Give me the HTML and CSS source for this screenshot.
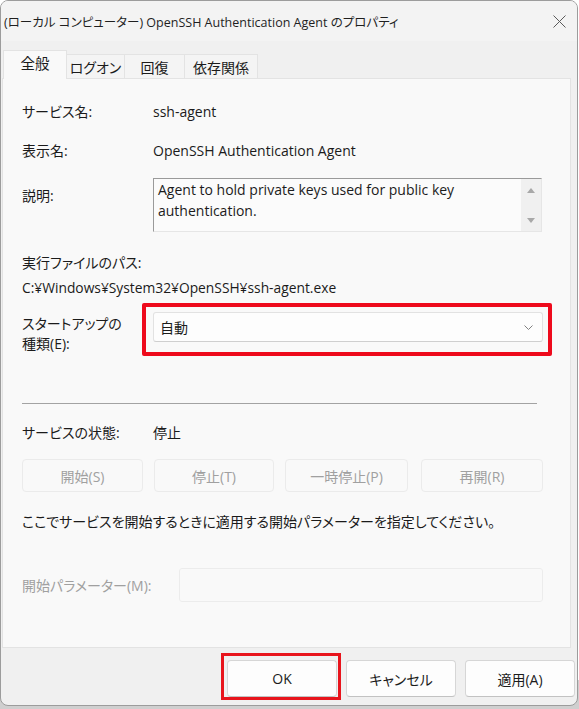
FILE: index.html
```html
<!DOCTYPE html>
<html lang="ja">
<head>
<meta charset="utf-8">
<title>OpenSSH Authentication Agent のプロパティ</title>
<link rel="stylesheet" href="styles.css">
</head>
<body>
<div class="window">
  <div class="titlebar">
    <span class="title">(ローカル コンピューター) OpenSSH Authentication Agent のプロパティ</span>
    <svg class="close" width="13" height="13" viewBox="0 0 13 13"><path d="M0.5 0.5 L12.5 12.5 M12.5 0.5 L0.5 12.5" stroke="#5a5a5a" stroke-width="1" fill="none"/></svg>
  </div>
  <div class="tabs">
    <div class="tab active">全般</div>
    <div class="tab t-logon">ログオン</div>
    <div class="tab t-recovery">回復</div>
    <div class="tab t-deps">依存関係</div>
  </div>
  <div class="panel">
    <div class="row r-name"><span class="label">サービス名:</span><span class="value">ssh-agent</span></div>
    <div class="row r-display"><span class="label">表示名:</span><span class="value">OpenSSH Authentication Agent</span></div>
    <div class="row r-desc">
      <span class="label">説明:</span>
      <div class="desc">
        <div class="desc-text">Agent to hold private keys used for public key authentication.</div>
        <div class="scroll">
          <span class="arrow up"></span>
          <span class="arrow down"></span>
        </div>
      </div>
    </div>
    <div class="row r-pathlabel"><span class="label">実行ファイルのパス:</span></div>
    <div class="row r-path"><span class="path">C:¥Windows¥System32¥OpenSSH¥ssh-agent.exe</span></div>
    <div class="row r-startup">
      <span class="label two">スタートアップの<br>種類(E):</span>
      <div class="select-wrap">
        <div class="select"><span>自動</span><svg class="chev" width="9" height="5" viewBox="0 0 9 5"><path d="M0.5 0.5 L4.5 4.5 L8.5 0.5" stroke="#808080" stroke-width="1" fill="none"/></svg></div>
        <div class="highlight hl-select"></div>
      </div>
    </div>
    <div class="sep"></div>
    <div class="row r-status"><span class="label">サービスの状態:</span><span class="value">停止</span></div>
    <div class="btnrow">
      <div class="dbtn b1">開始(S)</div>
      <div class="dbtn b2">停止(T)</div>
      <div class="dbtn b3">一時停止(P)</div>
      <div class="dbtn b4">再開(R)</div>
    </div>
    <div class="row r-info"><span class="info">ここでサービスを開始するときに適用する開始パラメーターを指定してください。</span></div>
    <div class="row r-param"><span class="label dim">開始パラメーター(M):</span><div class="param-input"></div></div>
  </div>
  <div class="footer">
    <div class="okwrap"><div class="btn">OK</div><div class="highlight hl-ok"></div></div>
    <div class="btn">キャンセル</div>
    <div class="btn">適用(A)</div>
  </div>
</div>
</body>
</html>
```

FILE: styles.css
```css
* { box-sizing: border-box; }
html, body {
  margin: 0;
  padding: 0;
}
body {
  width: 579px;
  height: 709px;
  overflow: hidden;
  background: linear-gradient(#ffffff 0 680px, #cfcfcf 680px);
  font-family: "Open Sans", "Noto Sans CJK JP", sans-serif;
  font-feature-settings: "palt";
  font-size: 14px;
  color: #1b1b1b;
}
.window {
  width: 578px;
  height: 706px;
  border: 1px solid #9c9c9c;
  border-radius: 8px;
  background: #f0f0f0;
  overflow: hidden;
}
.titlebar {
  height: 40px;
  display: flex;
  align-items: center;
  justify-content: space-between;
  padding: 0 11px 0 3px;
  background: #f3f3f3;
}
.title {
  font-size: 12.5px;
  color: #1f1f1f;
  white-space: nowrap;
}
.tabs {
  display: flex;
  align-items: flex-end;
  height: 28px;
  margin-top: 9px;
  padding-left: 2px;
  position: relative;
  z-index: 2;
}
.tab {
  height: 24px;
  border: 1px solid #e3e3e3;
  border-bottom: none;
  background: #f4f4f4;
  display: flex;
  align-items: center;
  justify-content: center;
  font-size: 14px;
  margin-left: -1px;
}
.tab.active {
  height: 29px;
  width: 64px;
  background: #f9f9f9;
  font-size: 14.5px;
  padding-bottom: 5px;
  margin-left: 0;
  margin-bottom: -1px;
}
.t-logon { width: 59px; }
.t-recovery { width: 61px; }
.t-deps { width: 74px; }
.panel {
  margin-left: 1px;
  width: 569px;
  height: 570px;
  border: 1px solid #e3e3e3;
  background: #f9f9f9;
  padding-left: 19px;
  display: flex;
  flex-direction: column;
  position: relative;
  z-index: 1;
}
.row {
  display: flex;
  align-items: center;
  height: 24px;
}
.label {
  width: 131px;
  flex: none;
  white-space: nowrap;
}
.value { white-space: nowrap; }
.r-name { margin-top: 20px; }
.r-display { margin-top: 15px; }
.r-desc {
  margin-top: 16px;
  height: 54px;
  align-items: flex-start;
}
.r-desc .label { padding-top: 7px; }
.desc {
  width: 389px;
  height: 54px;
  border: 1px solid #e6e6e6;
  border-top-color: #9a9a9a;
  border-left-color: #9a9a9a;
  background: #fbfbfb;
  display: flex;
}
.desc-text {
  flex: 1;
  padding: 0 4px;
  line-height: 21px;
  font-size: 14px;
}
.scroll {
  width: 20px;
  background: #f0f0f0;
  display: flex;
  flex-direction: column;
  justify-content: space-between;
  align-items: center;
  padding: 9px 0 8px;
}
.arrow {
  width: 0;
  height: 0;
  border-left: 4px solid transparent;
  border-right: 4px solid transparent;
}
.arrow.up { border-bottom: 5px solid #a8a8a8; }
.arrow.down { border-top: 5px solid #a8a8a8; }
.r-pathlabel { margin-top: 18px; }
.r-path { margin-top: 1px; }
.path { white-space: nowrap; font-size: 13.8px; }
.r-startup {
  margin-top: 13px;
  height: 44px;
  align-items: flex-start;
}
.label.two {
  line-height: 20px;
  padding-top: 2px;
}
.select-wrap { position: relative; }
.select {
  width: 390px;
  height: 30px;
  border: 1px solid #e2e2e2;
  border-bottom-color: #cfcfcf;
  border-radius: 3px;
  background: #fdfdfd;
  display: flex;
  align-items: center;
  justify-content: space-between;
  padding: 0 9px 0 6px;
}
.highlight {
  position: absolute;
  border: 4px solid #ee0a1c;
  border-radius: 2px;
  pointer-events: none;
}
.hl-select {
  left: -11px;
  top: -9px;
  width: 410px;
  height: 53px;
}
.sep {
  margin-top: 47px;
  width: 515px;
  height: 1px;
  background: #a3a3a3;
}
.r-status { margin-top: 16px; }
.btnrow {
  margin-top: 15px;
  display: flex;
  height: 33px;
}
.dbtn {
  height: 33px;
  border: 1px solid #ebebeb;
  border-radius: 4px;
  background: #f9f9f9;
  color: #a0a0a0;
  display: flex;
  align-items: center;
  justify-content: center;
}
.b1 { width: 121px; }
.b2 { width: 120px; margin-left: 11px; }
.b3 { width: 123px; margin-left: 11px; }
.b4 { width: 122px; margin-left: 13px; }
.r-info { margin-top: 17px; }
.info { white-space: nowrap; }
.r-param {
  margin-top: 35px;
  height: 34px;
}
.label.dim {
  width: 157px;
  color: #a0a0a0;
}
.param-input {
  width: 364px;
  height: 34px;
  border: 1px solid #ececec;
  border-radius: 3px;
  background: #f9f9f9;
}
.footer {
  display: flex;
  justify-content: flex-end;
  padding: 12px 2px 0 0;
  gap: 9px;
}
.okwrap { position: relative; }
.btn {
  width: 110px;
  height: 37px;
  border: 1px solid #d6d6d6;
  border-bottom-color: #c2c2c2;
  border-radius: 4px;
  background: #fdfdfd;
  display: flex;
  align-items: center;
  justify-content: center;
  font-size: 14px;
}
.hl-ok {
  left: -6px;
  top: -7px;
  width: 120px;
  height: 47px;
  border-width: 3px;
  border-color: #e8141c;
  border-radius: 0;
}
```
